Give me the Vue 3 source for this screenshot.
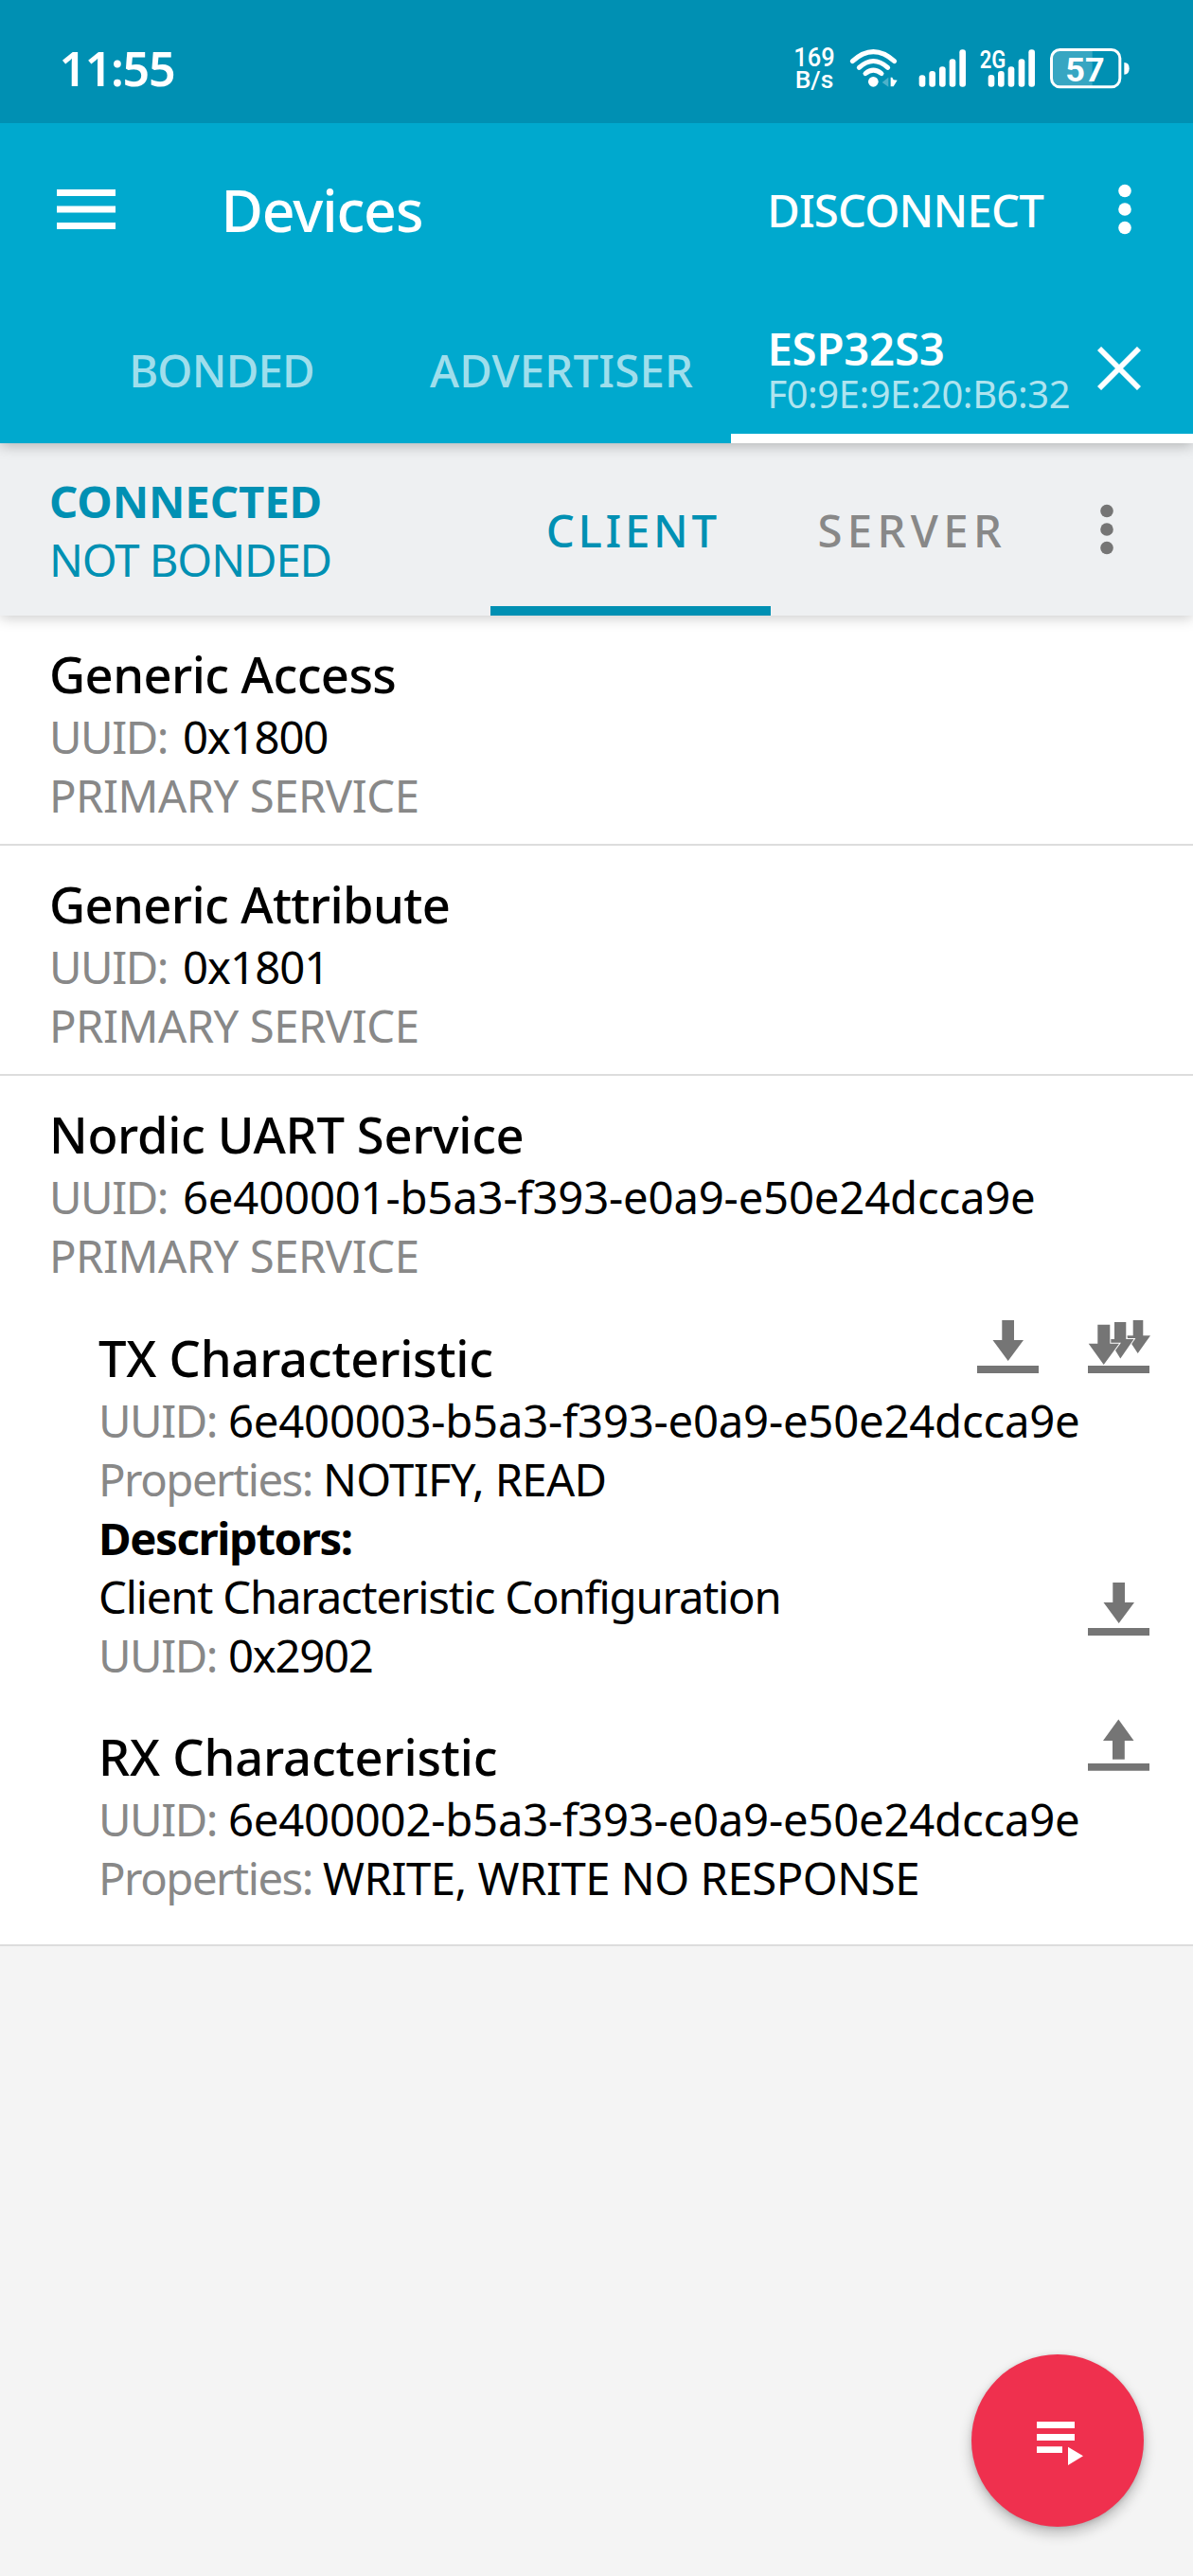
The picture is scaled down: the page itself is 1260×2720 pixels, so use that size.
<script setup>
const services = [
  {
    name: 'Generic Access', nameSpacing: -0.57,
    uuid: '0x1800', uuidSpacing: -1.19,
    characteristics: [],
  },
  {
    name: 'Generic Attribute', nameSpacing: -0.63,
    uuid: '0x1801', uuidSpacing: -1,
    characteristics: [],
  },
  {
    name: 'Nordic UART Service', nameSpacing: -0.35,
    uuid: '6e400001-b5a3-f393-e0a9-e50e24dcca9e', uuidSpacing: -0.2,
    characteristics: [
      {
        name: 'TX Characteristic', nameSpacing: -0.23,
        uuid: '6e400003-b5a3-f393-e0a9-e50e24dcca9e',
        properties: 'NOTIFY, READ', propertiesSpacing: -0.7,
        actions: ['read', 'notify'],
        descriptors: [
          { name: 'Client Characteristic Configuration', uuid: '0x2902' },
        ],
      },
      {
        name: 'RX Characteristic', nameSpacing: -0.18,
        uuid: '6e400002-b5a3-f393-e0a9-e50e24dcca9e',
        properties: 'WRITE, WRITE NO RESPONSE', propertiesSpacing: -0.5,
        actions: ['write'],
        descriptors: [],
      },
    ],
  },
]

const spacing = (px) => ({ letterSpacing: `${px}px` })
</script>

<template>
  <div class="screen">
    <header class="status">
      <span class="clock">11:55</span>
      <div class="indicators">
        <svg class="ind" width="58.33" viewBox="50 15 175 200">
          <text x="54" y="120" font-size="81" font-weight="500" textLength="130" lengthAdjust="spacingAndGlyphs">169</text>
          <text x="58" y="188" font-size="77" font-weight="500" textLength="122" lengthAdjust="spacingAndGlyphs">B/s</text>
        </svg>
        <svg class="ind" width="73.33" viewBox="225 15 220 200">
          <g fill="none" stroke="#fff" stroke-width="15" stroke-linecap="round">
            <path d="M241 104Q307 44 374 104" />
            <path d="M262 124Q307 83 353 124" />
            <path d="M282 143Q307 122 333 143" />
          </g>
          <circle cx="307" cy="169" r="16" />
          <path d="M335 171l20-16v30z" opacity=".3" />
          <path d="M362 155h5l4 8 12 1-12 20h-9z" />
        </svg>
        <svg class="ind" width="65" viewBox="445 15 195 200">
          <rect x="453" y="148" width="20" height="37" rx="9" />
          <rect x="485" y="135" width="20" height="50" rx="9" />
          <rect x="517" y="121" width="20" height="64" rx="9" />
          <rect x="549" y="97" width="20" height="88" rx="9" />
          <rect x="581" y="67" width="20" height="118" rx="9" />
        </svg>
        <svg class="ind" width="73.33" viewBox="640 15 220 200">
          <text x="645" y="125" font-size="79" font-weight="600" textLength="83" lengthAdjust="spacingAndGlyphs">2G</text>
          <rect x="672" y="147" width="20" height="38" rx="9" />
          <rect x="703" y="135" width="20" height="50" rx="9" />
          <rect x="735" y="121" width="20" height="64" rx="9" />
          <rect x="768" y="97" width="20" height="88" rx="9" />
          <rect x="800" y="67" width="20" height="118" rx="9" />
        </svg>
        <svg class="ind" width="86.67" viewBox="860 15 260 200">
          <path d="M1000 68H898Q872 68 872 94V158Q872 184 898 184H1000Z" fill="#37a6c2" />
          <rect x="870.5" y="67.5" width="217" height="118" rx="27" fill="none" stroke="#fff" stroke-width="9" />
          <path d="M1101 108q16 0 16 19t-16 19z" />
          <text x="915" y="167" font-size="108" font-weight="700" textLength="124" lengthAdjust="spacingAndGlyphs">57</text>
        </svg>
      </div>
    </header>

    <div class="appbar">
      <div class="toolbar">
        <svg class="menu" width="62" height="42" viewBox="0 0 62 42" fill="#fff">
          <path d="M0 0h62v7H0zM0 17.5h62v7H0zM0 35h62v7H0z" />
        </svg>
        <h1 class="heading">Devices</h1>
        <span class="disconnect">DISCONNECT</span>
        <svg class="kebab" width="14" height="54" viewBox="0 0 14 54" fill="#fff">
          <circle cx="7" cy="7.5" r="6.8" /><circle cx="7" cy="27" r="6.8" /><circle cx="7" cy="46.5" r="6.8" />
        </svg>
      </div>
      <nav class="tabs">
        <span class="tab bonded">BONDED</span>
        <span class="tab advertiser">ADVERTISER</span>
        <div class="device">
          <div class="device-text">
            <span class="device-name">ESP32S3</span>
            <span class="device-mac">F0:9E:9E:20:B6:32</span>
          </div>
          <svg class="close" width="46" height="46" viewBox="0 0 46 46" fill="none" stroke="#fff" stroke-width="5.8">
            <path d="M2 2L44 44M44 2L2 44" />
          </svg>
        </div>
      </nav>
    </div>

    <div class="connection">
      <div class="state">
        <div class="connected">CONNECTED</div>
        <div class="bond">NOT BONDED</div>
      </div>
      <div class="role client">CLIENT</div>
      <div class="role server">SERVER</div>
      <svg class="kebab-grey" width="14" height="54" viewBox="0 0 14 54" fill="#757575">
        <circle cx="7" cy="7.5" r="6.8" /><circle cx="7" cy="27" r="6.8" /><circle cx="7" cy="46.5" r="6.8" />
      </svg>
    </div>

    <main>
      <section v-for="s in services" :key="s.uuid" class="service" :class="{ expanded: s.characteristics.length }">
        <h2 class="title" :style="spacing(s.nameSpacing)">{{ s.name }}</h2>
        <div class="line">
          <span class="label wide">UUID:</span><span :style="spacing(s.uuidSpacing)">{{ s.uuid }}</span>
        </div>
        <div class="line primary">PRIMARY SERVICE</div>

        <article v-for="c in s.characteristics" :key="c.uuid" class="characteristic">
          <div class="row">
            <h3 class="title" :style="spacing(c.nameSpacing)">{{ c.name }}</h3>
            <div class="actions">
              <template v-for="a in c.actions" :key="a">
                <svg v-if="a === 'read'" class="action" width="66" height="56" viewBox="0 0 66 56">
                  <path d="M26.3 0H39V21H49L32.7 43 16.5 21H26.3zM0 48H65V56H0z" />
                </svg>
                <svg v-else-if="a === 'notify'" class="action" width="66" height="56" viewBox="0 0 66 56">
                  <path d="M47.7 0H58.3V16.3H66L52.7 35 41.5 18V16.3H47.7z" />
                  <path class="cut" d="M28 2H40.3V20H48.5L34.3 40.5 23 22V20H28z" />
                  <path class="cut" d="M10.3 4.7H23.3V24.7H33L16.7 47 .7 24.7H10.3z" />
                  <path d="M0 48H65V56H0z" />
                </svg>
                <svg v-else class="action" width="66" height="56" viewBox="0 0 66 56">
                  <path d="M32.3 .5L48.5 23H38.8V42.7H26V23H16zM0 47H65V54.8H0z" />
                </svg>
              </template>
            </div>
          </div>
          <div class="line"><span class="label">UUID:</span><span class="long">{{ c.uuid }}</span></div>
          <div class="line">
            <span class="label properties">Properties:</span><span :style="spacing(c.propertiesSpacing)">{{ c.properties }}</span>
          </div>
          <template v-if="c.descriptors.length">
            <div class="line strong">Descriptors:</div>
            <div v-for="d in c.descriptors" :key="d.uuid" class="row">
              <div>
                <div class="line descriptor">{{ d.name }}</div>
                <div class="line"><span class="label">UUID:</span><span class="short">{{ d.uuid }}</span></div>
              </div>
              <svg class="action descriptor-read" width="66" height="56" viewBox="0 0 66 56">
                <path d="M26.3 0H39V21H49L32.7 43 16.5 21H26.3zM0 48H65V56H0z" />
              </svg>
            </div>
          </template>
        </article>
      </section>
    </main>

    <button class="fab" type="button" aria-label="Macros">
      <svg width="50" height="47" viewBox="0 0 50 47" fill="#fff">
        <path d="M0 0H40V7H0zM0 13H40V20H0zM0 26.3H27V33H0zM33 26.7L49 36.3 33 46z" />
      </svg>
    </button>
  </div>
</template>

<style>
body {
  background: #f4f4f4;
}
</style>

<style scoped>
.screen {
  position: relative;
  width: 1260px;
  height: 2720px;
  overflow: hidden;
  background: #f4f4f4;
  color: #000;
  font-family: "Noto Sans", "Open Sans", sans-serif;
  font-size: 47.3px;
  white-space: nowrap;
}

.status {
  position: relative;
  z-index: 3;
  display: flex;
  height: 130px;
  padding: 0 66.6px 0 62.4px;
  justify-content: space-between;
  background: #0090b3;
  color: #fff;
}

.clock {
  padding-top: 17px;
  font-size: 50.1px;
  font-weight: 600;
  line-height: 110px;
  letter-spacing: -1.3px;
}

.indicators {
  display: flex;
  padding-top: 35px;
}

.ind {
  height: 66.67px;
  fill: #fff;
  font-family: Roboto, "Noto Sans", sans-serif;
}

.appbar {
  position: relative;
  z-index: 2;
  height: 338px;
  background: #00a9ce;
  color: #fff;
  box-shadow: 0 2px 14px rgba(0, 0, 0, 0.28);
}

.toolbar {
  display: flex;
  height: 182px;
  align-items: center;
  padding: 0 65px 0 60px;
}

.heading {
  margin: 0 auto 0 111.4px;
  font-size: 60.8px;
  font-weight: 500;
  letter-spacing: -1.14px;
}

.disconnect {
  margin-right: 79px;
  font-weight: 500;
  letter-spacing: -0.8px;
}

.tabs {
  display: flex;
  height: 156px;
  align-items: center;
}

.tab {
  color: rgba(255, 255, 255, 0.65);
  font-weight: 500;
}

.bonded {
  width: 317.8px;
  padding-left: 136.2px;
  letter-spacing: -0.75px;
}

.advertiser {
  width: 318px;
  letter-spacing: 0.21px;
}

.device {
  display: flex;
  box-sizing: border-box;
  width: 488px;
  height: 156px;
  flex: none;
  align-items: center;
  justify-content: space-between;
  padding: 5px 55px 0 38.4px;
  border-bottom: 10px solid #fff;
}

.device-text {
  display: flex;
  flex-direction: column;
}

.device-name {
  font-weight: 600;
  line-height: 56px;
  letter-spacing: -0.2px;
}

.device-mac {
  color: rgba(255, 255, 255, 0.7);
  font-size: 39.9px;
  line-height: 40px;
  letter-spacing: -0.43px;
}

.close {
  margin-top: 3px;
}

.connection {
  position: relative;
  z-index: 1;
  display: flex;
  height: 182px;
  align-items: center;
  background: #eef0f2;
  box-shadow: 0 2px 14px rgba(0, 0, 0, 0.22);
}

.state {
  width: 466px;
  padding: 1px 0 0 52px;
  color: #0090b3;
  line-height: 62px;
}

.connected {
  font-weight: 700;
  letter-spacing: -0.1px;
}

.bond {
  letter-spacing: -1.1px;
}

.role {
  box-sizing: border-box;
  height: 182px;
  line-height: 183px;
  font-weight: 500;
}

.client {
  width: 296px;
  padding-left: 58.8px;
  border-bottom: 10px solid #0090b3;
  color: #0090b3;
  letter-spacing: 3.7px;
}

.server {
  width: 347.8px;
  padding-left: 49.4px;
  color: #888;
  letter-spacing: 5.4px;
}

.service {
  padding: 27px 0 20px 52px;
  border-bottom: 2px solid #ddd;
  background: #fff;
}

.expanded {
  padding-bottom: 39px;
}

.title {
  margin: 0;
  font-size: 52.5px;
  font-weight: 500;
  line-height: 70px;
}

.line {
  height: 62px;
  line-height: 62px;
}

.label {
  display: inline-block;
  width: 137px;
  color: #888;
  letter-spacing: -1.5px;
}

.wide {
  width: 141px;
}

.properties {
  width: 237px;
}

.primary {
  color: #888;
  letter-spacing: -0.5px;
}

.long {
  letter-spacing: -0.23px;
}

.short {
  letter-spacing: -1.3px;
}

.strong {
  font-weight: 700;
  letter-spacing: -1.4px;
}

.descriptor {
  letter-spacing: -1.19px;
}

.characteristic {
  margin-top: 42px;
  padding: 0 45px 0 52px;
}

.characteristic + .characteristic {
  margin-top: 41px;
}

.row {
  display: flex;
  align-items: flex-start;
  justify-content: space-between;
}

.actions {
  display: flex;
  gap: 51px;
  margin-top: -5px;
}

.action {
  display: block;
  fill: #757575;
}

.cut {
  stroke: #fff;
  stroke-width: 2px;
  paint-order: stroke;
}

.descriptor-read {
  margin-top: 16px;
}

.fab {
  position: absolute;
  right: 52px;
  bottom: 52px;
  z-index: 3;
  display: flex;
  width: 182px;
  height: 182px;
  align-items: center;
  justify-content: center;
  padding: 7px 0 0 5px;
  border: 0;
  border-radius: 50%;
  background: #ef304e;
  box-shadow: 0 7px 14px rgba(0, 0, 0, 0.24), 0 1px 5px rgba(0, 0, 0, 0.12);
}
</style>
